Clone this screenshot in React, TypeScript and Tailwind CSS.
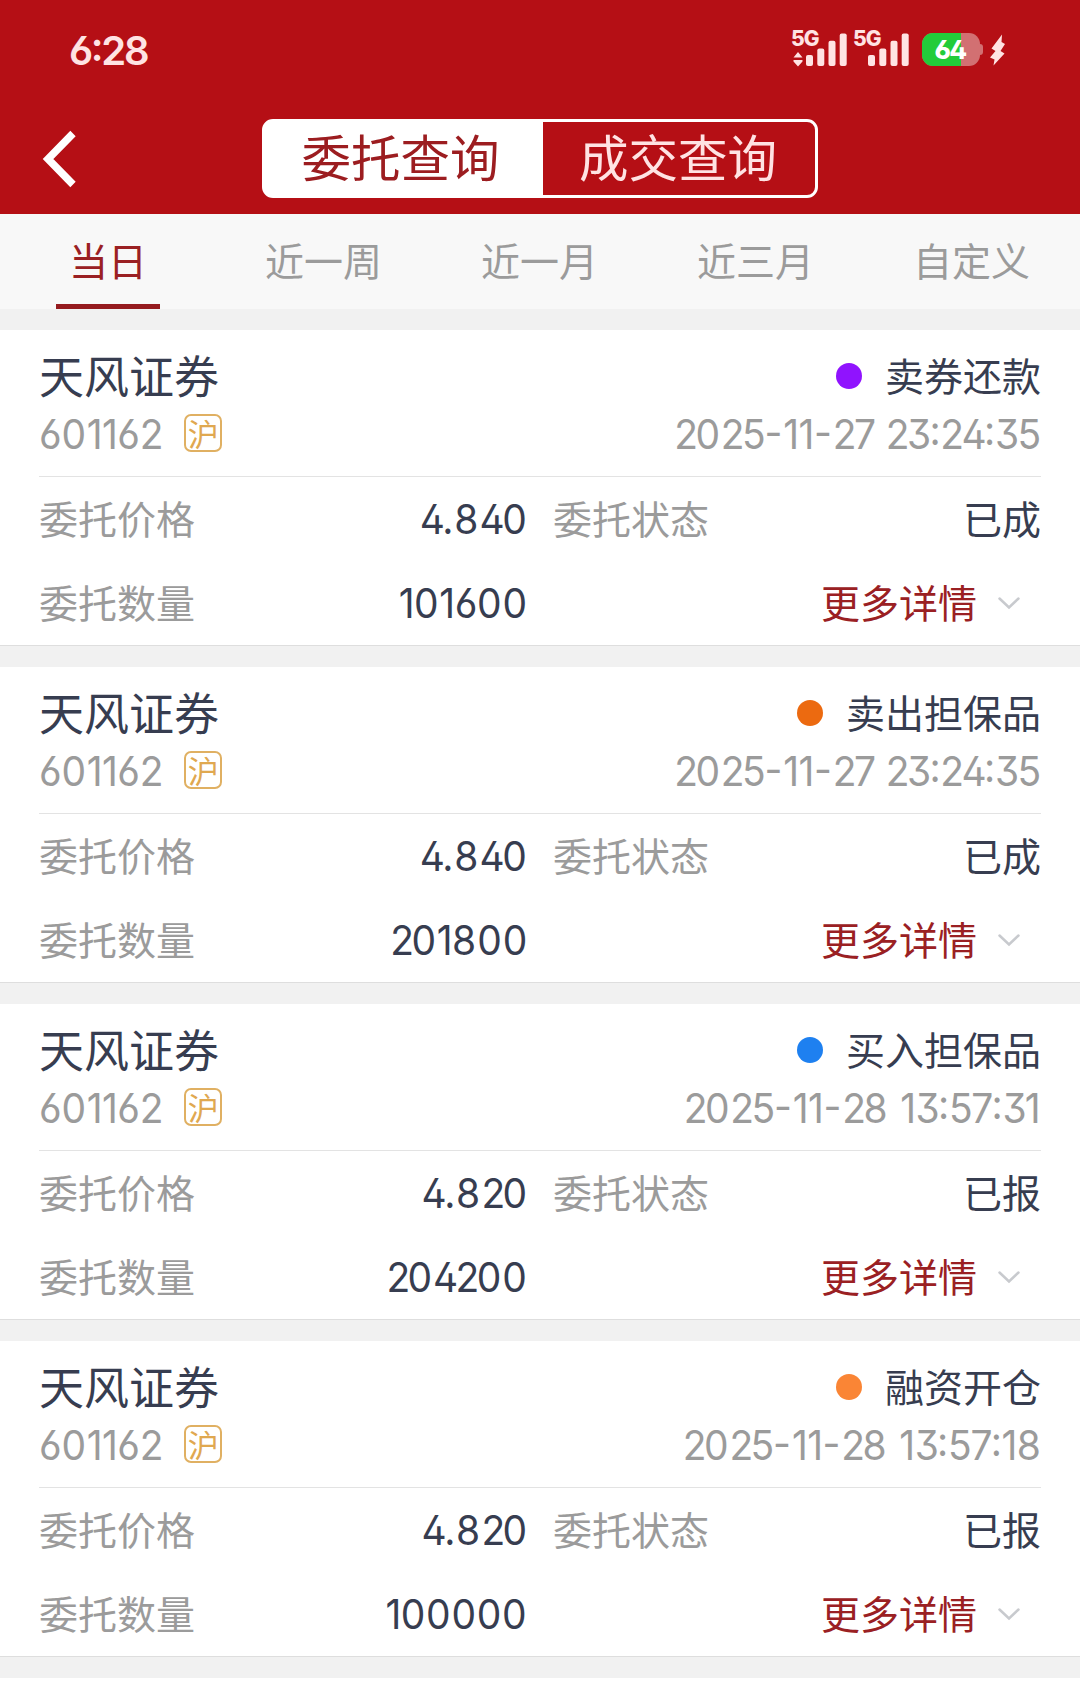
type Order = {
  dot: string;
  kind: string;
  time: string;
  price: string;
  status: string;
  amount: string;
};

const orders: Order[] = [
  { dot: "bg-[#9013fe]", kind: "卖券还款", time: "2025-11-27 23:24:35", price: "4.840", status: "已成", amount: "101600" },
  { dot: "bg-[#ec6a10]", kind: "卖出担保品", time: "2025-11-27 23:24:35", price: "4.840", status: "已成", amount: "201800" },
  { dot: "bg-[#1e80f0]", kind: "买入担保品", time: "2025-11-28 13:57:31", price: "4.820", status: "已报", amount: "204200" },
  { dot: "bg-[#fa8535]", kind: "融资开仓", time: "2025-11-28 13:57:18", price: "4.820", status: "已报", amount: "100000" },
];

const tabs = ["当日", "近一周", "近一月", "近三月", "自定义"];

// Spaces each digit individually so figures set with proportional widths.
const tracking: Record<string, string> = {
  "0": "tracking-[0.8px]",
  "1": "tracking-[-0.6px]",
  "2": "tracking-[-2.7px]",
  "3": "tracking-[-1.8px]",
  "4": "tracking-[-2.6px]",
  "5": "tracking-[-1.3px]",
  "6": "tracking-[-0.2px]",
  "7": "tracking-[-1.9px]",
  "8": "tracking-[1.3px]",
  ":": "tracking-[-0.4px]",
  "-": "tracking-[1px]",
  ".": "tracking-[0.6px]",
  " ": "tracking-[0.6px]",
};

function Num({ value, origin = "origin-right" }: { value: string; origin?: string }) {
  return (
    <span
      className={`inline-block scale-x-95 font-['Inter','Noto_Sans_CJK_SC',sans-serif] text-[41px] leading-[48px] whitespace-pre [font-feature-settings:'ss01','case'] ${origin}`}
    >
      {value.split("").map((c, i) => (
        <span key={i} className={i < value.length - 1 ? tracking[c] : undefined}>
          {c}
        </span>
      ))}
    </span>
  );
}

function Signal({ arrows }: { arrows?: boolean }) {
  return (
    <div className="relative h-[38px] w-[55px]">
      <span className="absolute top-0 left-[-1px] text-[21px] leading-[17px] font-extrabold tracking-[-1px]">5G</span>
      <svg className="absolute inset-0" width="55" height="38" viewBox="0 0 55 38" fill="currentColor">
        {arrows && <path d="M1.500 27.500 6 22l4.500 5.500zM1.500 30h9v1.500L6 36.500 1.500 31.500z" />}
        <rect x="14" y="25" width="7" height="11" rx="2" />
        <rect x="25.300" y="18.500" width="7" height="17.500" rx="2" />
        <rect x="36.500" y="10.800" width="7" height="25.200" rx="2" />
        <rect x="47.700" y="3.500" width="7" height="32.500" rx="2" />
      </svg>
    </div>
  );
}

function StatusBar() {
  return (
    <div className="flex h-[100px] items-start justify-between pt-[30px] pr-[75px] pl-[69px] font-['Inter',sans-serif] text-[#ffe3e3]">
      <span className="text-[40px] leading-[41px] font-semibold tracking-[-2.300px] [font-feature-settings:'ss01','case']">6:28</span>
      <div className="flex items-start">
        <Signal arrows />
        <div className="w-[7px]" />
        <Signal />
        <div className="relative mt-[3px] ml-[13px] flex h-[33px] w-[58px] items-center justify-center overflow-hidden rounded-[11px] bg-[#d27072]">
          <div className="absolute inset-y-0 left-0 w-[39px] bg-[#22cc3a]" />
          <span className="relative pr-[2px] text-[26px] leading-[33px] font-extrabold tracking-[-1.500px] text-white [font-feature-settings:'ss01']">64</span>
        </div>
        <div className="mt-[14px] h-[11px] w-[3px] rounded-r-[3px] bg-[#d27072]" />
        <svg className="mt-[4px] ml-[7px]" width="15" height="32" viewBox="0 0 15 32" fill="currentColor">
          <path d="M12 .5 1.500 14.500l4 2.500L0 23.500l4.500 2-1 6L14.500 19.500l-4-2.500L15 10l-3.500-2z" />
        </svg>
      </div>
    </div>
  );
}

function OrderCard({ order }: { order: Order }) {
  return (
    <section className="mb-[21px] h-[316px] border-b border-[#dedede] bg-white px-[39px]">
      <div className="flex h-[147px] flex-col border-b border-[#e3e3e3] pt-[17px]">
        <div className="flex h-[58px] items-center justify-between">
          <span className="pb-[3px] text-[45px] leading-[55px]">天风证券</span>
          <div className="flex items-center">
            <span className={`mr-[23px] size-[26px] rounded-full ${order.dot}`} />
            <span className="pb-[4px] text-[39px] leading-[54px]">{order.kind}</span>
          </div>
        </div>
        <div className="flex h-[58px] items-center justify-between text-[#9b9b9b]">
          <div className="flex items-center">
            <Num value="601162" origin="origin-left" />
            <span className="mb-[2px] ml-[14px] flex size-[38px] items-center justify-center rounded-[7px] border-2 border-[#e0b062] pb-px text-[31px] leading-none text-[#e0a850]">
              沪
            </span>
          </div>
          <Num value={order.time} />
        </div>
      </div>
      <div className="flex h-[84px] items-center">
        <div className="flex w-[488px] items-center justify-between">
          <span className="pb-[5px] text-[39px] leading-[54px] text-[#9b9b9b]">委托价格</span>
          <Num value={order.price} />
        </div>
        <div className="ml-[26px] flex flex-1 items-center justify-between pb-[5px]">
          <span className="text-[39px] leading-[54px] text-[#9b9b9b]">委托状态</span>
          <span className="text-[39px] leading-[54px]">{order.status}</span>
        </div>
      </div>
      <div className="flex h-[84px] items-center">
        <div className="flex w-[488px] items-center justify-between">
          <span className="pb-[5px] text-[39px] leading-[54px] text-[#9b9b9b]">委托数量</span>
          <Num value={order.amount} />
        </div>
        <div className="flex flex-1 items-center justify-end pr-[21px]">
          <span className="pb-[5px] text-[39px] leading-[54px] text-[#9a2023]">更多详情</span>
          <svg className="ml-[21px]" width="22" height="13" viewBox="0 0 22 13" fill="none" stroke="#c8cace" strokeWidth="2.500" strokeLinecap="round">
            <path d="M1.500 1.500 11 10.500l9.500-9" />
          </svg>
        </div>
      </div>
    </section>
  );
}

export default function App() {
  return (
    <main className="h-[1688px] w-[1080px] overflow-hidden bg-[#f1f1f1] font-['Noto_Sans_CJK_SC',sans-serif] text-[#373d50]">
      <header className="h-[214px] bg-[#b50f15]">
        <StatusBar />
        <div className="flex items-start pt-[19px] pl-[42px]">
          <svg className="mt-[11px]" width="36" height="58" viewBox="0 0 36 58" fill="none" stroke="#fff" strokeWidth="7.500">
            <path d="M31 3.500 6 29l25 25.500" />
          </svg>
          <div className="ml-[184px] flex h-[79px] w-[556px] rounded-[11px] border-3 border-white text-[49.500px]">
            <button className="-my-[2px] -ml-[2px] w-[280px] rounded-l-[10px] bg-white pr-[5px] pb-[6px] leading-[70px] text-[#9c1d20]">委托查询</button>
            <button className="flex-1 pr-[2px] pb-[6px] leading-[67px] text-[#ffe3e3]">成交查询</button>
          </div>
        </div>
      </header>
      <nav className="mb-[21px] grid h-[95px] grid-cols-5 bg-[#f8f8f8]">
        {tabs.map((tab, i) => (
          <button
            key={tab}
            className={
              i === 0
                ? "mx-auto flex h-[95px] w-[104px] justify-center border-b-5 border-[#951b1f] text-[39px] leading-[91px] text-[#9a2023]"
                : "flex justify-center pr-px text-[39px] leading-[91px] text-[#9b9b9b]"
            }
          >
            {tab}
          </button>
        ))}
      </nav>
      {orders.map((order, i) => (
        <OrderCard key={i} order={order} />
      ))}
      <div className="h-[10px] bg-white" />
    </main>
  );
}
